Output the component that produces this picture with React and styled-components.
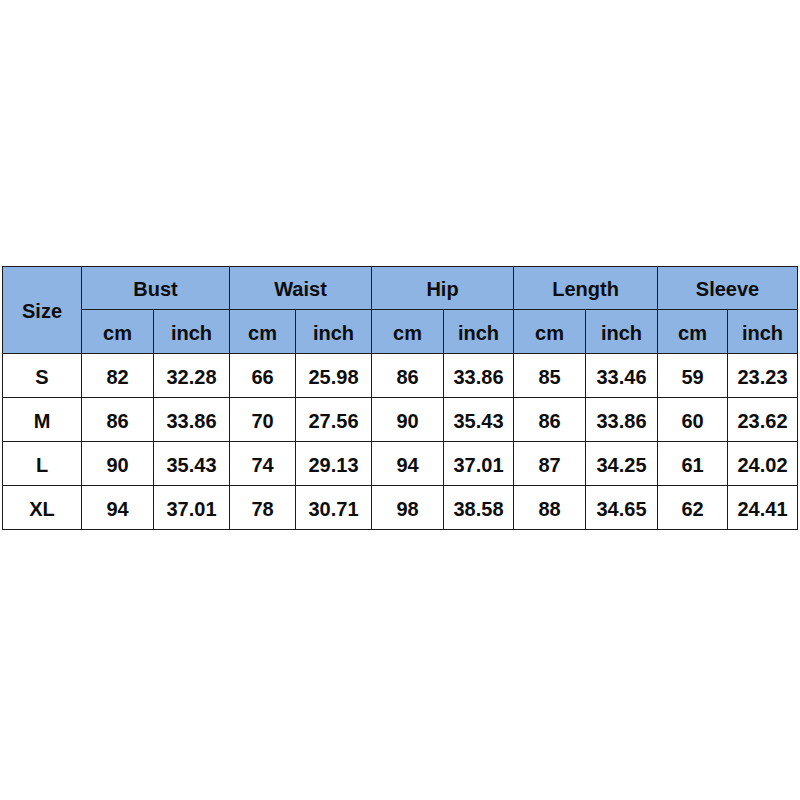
import React from 'react';
import styled, { createGlobalStyle } from 'styled-components';

const GlobalStyle = createGlobalStyle`
  html, body {
    margin: 0;
    padding: 0;
    background: #fff;
  }
`;

const Page = styled.div`
  width: 800px;
  height: 800px;
  box-sizing: border-box;
  padding: 266px 0 0 2px;
  font-family: 'Liberation Sans', Arial, sans-serif;
`;

const Table = styled.table`
  border-collapse: collapse;
  table-layout: fixed;
  width: 796px;
  border: 1px solid #1c1c1c;
`;

const HeadCell = styled.th`
  box-sizing: border-box;
  background: #8db4e2;
  border: 1px solid #1c1c1c;
  height: ${p => p.$h || 44}px;
  padding: 3px 0 0;
  font-size: 20px;
  font-weight: bold;
  color: #0d0d0d;
  text-align: center;
  vertical-align: middle;
`;

const Cell = styled.td`
  box-sizing: border-box;
  border: 1px solid #1c1c1c;
  height: 44px;
  padding: 3px 0 0;
  font-size: 20px;
  font-weight: bold;
  color: #0d0d0d;
  text-align: center;
  vertical-align: middle;
`;

const widths = [79, 72, 76, 66, 76, 72, 70, 72, 72, 70, 70];
const groups = ['Bust', 'Waist', 'Hip', 'Length', 'Sleeve'];

const rows = [
  ['S', '82', '32.28', '66', '25.98', '86', '33.86', '85', '33.46', '59', '23.23'],
  ['M', '86', '33.86', '70', '27.56', '90', '35.43', '86', '33.86', '60', '23.62'],
  ['L', '90', '35.43', '74', '29.13', '94', '37.01', '87', '34.25', '61', '24.02'],
  ['XL', '94', '37.01', '78', '30.71', '98', '38.58', '88', '34.65', '62', '24.41'],
];

export default function App() {
  return (
    <>
      <GlobalStyle />
      <Page>
        <Table>
          <colgroup>
            {widths.map((w, i) => <col key={i} style={{ width: w }} />)}
          </colgroup>
          <thead>
            <tr>
              <HeadCell rowSpan={2}>Size</HeadCell>
              {groups.map(g => (
                <HeadCell key={g} colSpan={2} $h={43}>{g}</HeadCell>
              ))}
            </tr>
            <tr>
              {groups.map(g => (
                <React.Fragment key={g}>
                  <HeadCell>cm</HeadCell>
                  <HeadCell>inch</HeadCell>
                </React.Fragment>
              ))}
            </tr>
          </thead>
          <tbody>
            {rows.map(r => (
              <tr key={r[0]}>
                {r.map((v, i) => <Cell key={i}>{v}</Cell>)}
              </tr>
            ))}
          </tbody>
        </Table>
      </Page>
    </>
  );
}
